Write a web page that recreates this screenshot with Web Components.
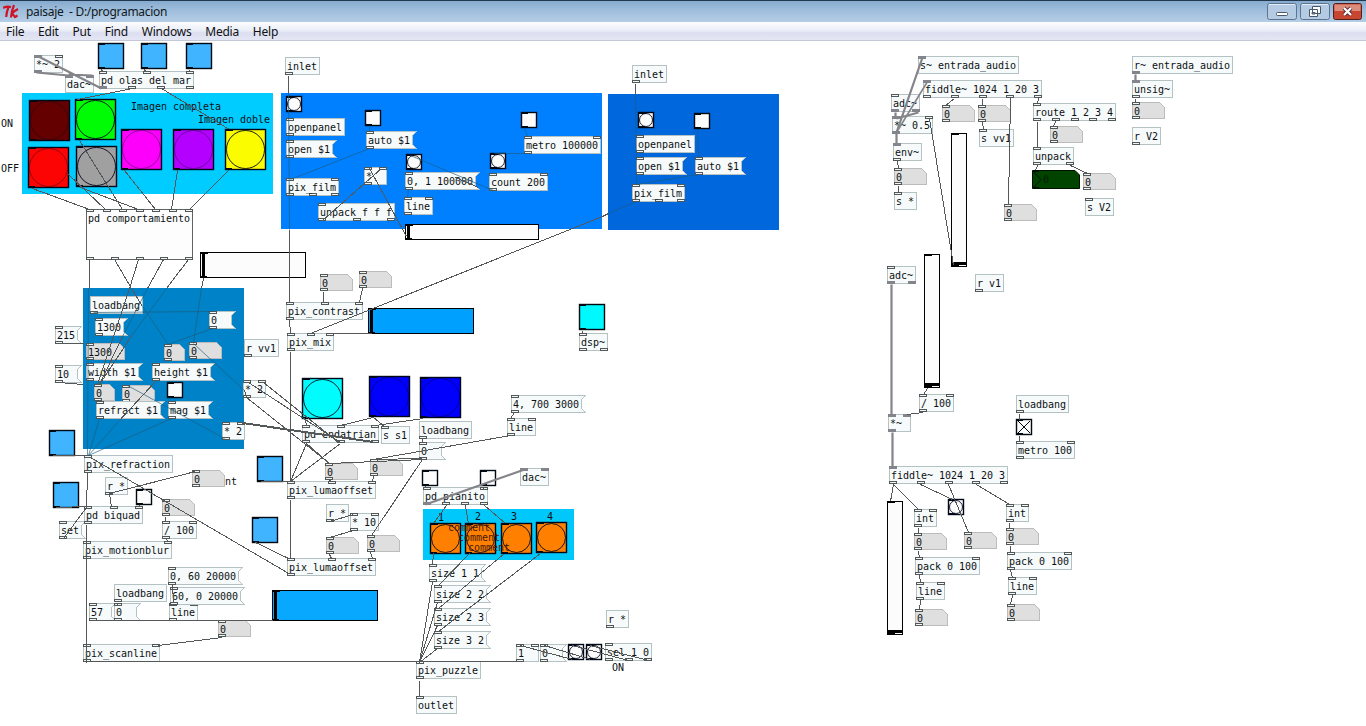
<!DOCTYPE html>
<html lang="en">
<head>
<meta charset="utf-8">
<title>paisaje - D:/programacion</title>
<style>
    body {
        margin: 0;
        background: #fff;
        overflow: hidden;
    }
</style>
</head>
<body>
<pd-window>
    <pd-titlebar slot="title">paisaje&nbsp; - D:/programacion</pd-titlebar>
    <pd-menu slot="menu"><span>File</span><span>Edit</span><span>Put</span><span>Find</span><span>Windows</span><span>Media</span><span>Help</span></pd-menu>

    <!-- panels -->
    <pd-panel x="22" y="93" w="251" h="101" color="#00ccff"></pd-panel>
    <pd-panel x="281" y="93" w="321" h="136" color="#0080ff"></pd-panel>
    <pd-panel x="608" y="94" w="171" h="136" color="#0068dc"></pd-panel>
    <pd-panel x="83" y="288" w="161" h="161" color="#0082c8"></pd-panel>
    <pd-panel x="423" y="509" w="151" h="51" color="#00c8fa"></pd-panel>

    <!-- image switches -->
    <pd-box x="34" y="55" in="sc" out="s">*~ 2</pd-box>
    <pd-box x="65" y="75" in="ss">dac~</pd-box>
    <pd-toggle x="98" y="43" size="26" color="#40b4ff"></pd-toggle>
    <pd-toggle x="141" y="43" size="26" color="#40b4ff"></pd-toggle>
    <pd-toggle x="186" y="43" size="26" color="#40b4ff"></pd-toggle>
    <pd-box x="99" y="71" in="ccc" out="sccc">pd olas del mar</pd-box>
    <pd-bang faint x="29" y="100" size="41" color="#640000"></pd-bang>
    <pd-bang x="75" y="99" size="41" color="#00fc04"></pd-bang>
    <pd-bang faint x="28" y="147" size="41" color="#fc0404"></pd-bang>
    <pd-bang x="76" y="146" size="41" color="#a0a0a0"></pd-bang>
    <pd-bang faint x="121" y="129" size="41" color="#fc00fc"></pd-bang>
    <pd-bang faint x="173" y="129" size="41" color="#b400ff"></pd-bang>
    <pd-bang x="225" y="129" size="41" color="#fcfc00"></pd-bang>
    <pd-box kind="text" x="129" y="97">Imagen completa</pd-box>
    <pd-box kind="text" x="196" y="110">Imagen doble</pd-box>
    <pd-box kind="text" x="-1" y="114">ON</pd-box>
    <pd-box kind="text" x="-1" y="159">OFF</pd-box>
    <pd-box class="sub" x="86" y="209" w="107" h="51" in="ccccccc" out="ccccc">pd comportamiento</pd-box>
    <pd-slider x="200" y="252" w="106" h="26"></pd-slider>

    <!-- first film -->
    <pd-box x="285" y="57" out="c">inlet</pd-box>
    <pd-bang x="286" y="96" size="16"></pd-bang>
    <pd-box x="286" y="118" in="c" out="c">openpanel</pd-box>
    <pd-box kind="msg" x="286" y="140" in="c" out="c">open $1</pd-box>
    <pd-box x="286" y="178" in="cc" out="ccc">pix_film</pd-box>
    <pd-toggle x="365" y="110" size="16"></pd-toggle>
    <pd-box kind="msg" x="366" y="131" in="c" out="c">auto $1</pd-box>
    <pd-bang x="406" y="154" size="16"></pd-bang>
    <pd-box kind="msg" x="405" y="172" in="c" out="c">0, 1 100000</pd-box>
    <pd-box x="404" y="197" in="cc" out="c">line</pd-box>
    <pd-box x="364" y="167" in="cc" out="c">*</pd-box>
    <pd-box x="318" y="203" in="c" out="ccc">unpack f f f</pd-box>
    <pd-slider x="405" y="224" w="134" h="16"></pd-slider>
    <pd-toggle x="521" y="112" size="16"></pd-toggle>
    <pd-box x="524" y="136" in="cc" out="c">metro 100000</pd-box>
    <pd-bang x="490" y="153" size="16"></pd-bang>
    <pd-box x="489" y="173" in="cc" out="c">count 200</pd-box>

    <!-- second film -->
    <pd-box x="632" y="65" out="c">inlet</pd-box>
    <pd-bang x="638" y="112" size="16"></pd-bang>
    <pd-toggle x="694" y="113" size="16"></pd-toggle>
    <pd-box x="636" y="135" in="c" out="c">openpanel</pd-box>
    <pd-box kind="msg" x="636" y="157" in="c" out="c">open $1</pd-box>
    <pd-box kind="msg" x="695" y="157" in="c" out="c">auto $1</pd-box>
    <pd-box x="632" y="184" in="cc" out="ccc">pix_film</pd-box>

    <!-- refraction -->
    <pd-box x="90" y="296" out="c">loadbang</pd-box>
    <pd-box kind="msg" x="95" y="318" in="c" out="c">1300</pd-box>
    <pd-box kind="msg" x="209" y="311" in="c" out="c">0</pd-box>
    <pd-box kind="msg" x="55" y="326" in="c" out="c">215</pd-box>
    <pd-box kind="msg" x="55" y="365" in="c" out="c">10</pd-box>
    <pd-box kind="atom" x="86" y="343" w="39" in="c" out="c">1300</pd-box>
    <pd-box kind="msg" x="86" y="363" in="c" out="c">width $1</pd-box>
    <pd-box kind="msg" x="152" y="363" in="c" out="c">height $1</pd-box>
    <pd-box kind="atom" x="164" y="344" w="21" in="c" out="c">0</pd-box>
    <pd-box kind="atom" x="189" y="342" in="c" out="c">0</pd-box>
    <pd-box x="244" y="339" out="c">r vv1</pd-box>
    <pd-box x="243" y="380" in="cc" out="c">* 2</pd-box>
    <pd-box kind="atom" x="94" y="384" w="21" in="c" out="c">0</pd-box>
    <pd-box kind="atom" x="122" y="385" in="c" out="c">0</pd-box>
    <pd-toggle x="167" y="382" size="16"></pd-toggle>
    <pd-box kind="msg" x="96" y="401" in="c" out="c">refract $1</pd-box>
    <pd-box kind="msg" x="168" y="401" in="c" out="c">mag $1</pd-box>
    <pd-box x="222" y="422" in="cc" out="c">* 2</pd-box>
    <pd-toggle x="49" y="430" size="26" color="#40b4ff"></pd-toggle>
    <pd-box x="84" y="455" in="c" out="c">pix_refraction</pd-box>
    <pd-toggle x="53" y="482" size="26" color="#40b4ff"></pd-toggle>
    <pd-box x="105" y="477" out="c">r *</pd-box>
    <pd-box kind="text" x="223" y="472">nt</pd-box>
    <pd-box kind="atom" x="192" y="470" in="c" out="c">0</pd-box>
    <pd-toggle x="136" y="489" size="16"></pd-toggle>
    <pd-box kind="msg" x="59" y="521" in="c" out="c">set</pd-box>
    <pd-box x="84" y="506" in="ccc" out="c">pd biquad</pd-box>
    <pd-box kind="atom" x="162" y="499" in="c" out="c">0</pd-box>
    <pd-box x="162" y="521" in="cc" out="c">/ 100</pd-box>
    <pd-box x="83" y="541" in="cc" out="c">pix_motionblur</pd-box>
    <pd-box kind="msg" x="168" y="567" in="c" out="c">0, 60 20000</pd-box>
    <pd-box x="169" y="603" in="cc" out="c">line</pd-box>
    <pd-box kind="msg" x="170" y="587" in="c" out="c">60, 0 20000</pd-box>
    <pd-box x="114" y="584" out="c">loadbang</pd-box>
    <pd-box kind="msg" x="89" y="603" in="c" out="c">57</pd-box>
    <pd-box kind="msg" x="114" y="603" in="c" out="c">0</pd-box>
    <pd-box kind="atom" x="218" y="620" in="c" out="c">0</pd-box>
    <pd-box x="83" y="644" in="cc" out="c">pix_scanline</pd-box>
    <pd-slider x="272" y="590" w="106" h="31" color="#08a8ff"></pd-slider>

    <!-- contrast and mix -->
    <pd-box kind="atom" x="320" y="274" in="c" out="c">0</pd-box>
    <pd-box kind="atom" x="359" y="271" in="c" out="c">0</pd-box>
    <pd-box x="286" y="302" in="ccc" out="c">pix_contrast</pd-box>
    <pd-box x="287" y="333" in="ccc" out="c">pix_mix</pd-box>
    <pd-slider x="368" y="308" w="106" h="26" color="#00a0ff"></pd-slider>
    <pd-toggle x="579" y="304" size="26" color="#00f8ff"></pd-toggle>
    <pd-box x="579" y="333" in="c" out="cc">dsp~</pd-box>
    <pd-bang x="302" y="378" size="41" color="#00fcfc"></pd-bang>
    <pd-bang faint x="369" y="376" size="41" color="#0000fc"></pd-bang>
    <pd-bang faint x="420" y="377" size="41" color="#0000fc"></pd-bang>
    <pd-box x="302" y="425" in="ccc" out="ccc">pd endatrian</pd-box>
    <pd-box x="381" y="426" in="c">s s1</pd-box>
    <pd-box x="419" y="421" out="c">loadbang</pd-box>
    <pd-box kind="msg" x="419" y="442" in="c" out="c">0</pd-box>
    <pd-box kind="msg" x="511" y="395" in="c" out="c">4, 700 3000</pd-box>
    <pd-box x="507" y="418" in="cc" out="c">line</pd-box>

    <!-- luma offset -->
    <pd-toggle x="257" y="456" size="26" color="#40b4ff"></pd-toggle>
    <pd-toggle x="252" y="517" size="26" color="#40b4ff"></pd-toggle>
    <pd-box kind="atom" x="325" y="463" in="c" out="c">0</pd-box>
    <pd-box kind="atom" x="370" y="459" in="c" out="c">0</pd-box>
    <pd-box x="287" y="481" in="ccc" out="c">pix_lumaoffset</pd-box>
    <pd-box x="326" y="504" out="c">r *</pd-box>
    <pd-box x="350" y="513" in="cc" out="c">* 10</pd-box>
    <pd-box kind="atom" x="326" y="537" in="c" out="c">0</pd-box>
    <pd-box kind="atom" x="367" y="535" in="c" out="c">0</pd-box>
    <pd-box x="287" y="558" in="ccc" out="c">pix_lumaoffset</pd-box>

    <!-- puzzle -->
    <pd-toggle x="422" y="470" size="16"></pd-toggle>
    <pd-toggle x="480" y="470" size="16"></pd-toggle>
    <pd-box x="520" y="468" in="ss">dac~</pd-box>
    <pd-box x="423" y="487" in="cc" out="sccc">pd pianito</pd-box>
    <pd-box kind="text" x="436" y="508">1</pd-box>
    <pd-box kind="text" x="473" y="507">2</pd-box>
    <pd-box kind="text" x="509" y="507">3</pd-box>
    <pd-box kind="text" x="545" y="507">4</pd-box>
    <pd-bang x="430" y="523" size="31" color="#ff8000"></pd-bang>
    <pd-bang x="465" y="523" size="31" color="#ff8000"></pd-bang>
    <pd-bang x="501" y="523" size="31" color="#ff8000"></pd-bang>
    <pd-bang x="536" y="522" size="31" color="#ff8000"></pd-bang>
    <pd-box kind="text" class="dim" x="446" y="518">comment</pd-box>
    <pd-box kind="text" class="dim" x="456" y="528">comment</pd-box>
    <pd-box kind="text" class="dim" x="466" y="538">comment</pd-box>
    <pd-box kind="msg" x="429" y="564" in="c" out="c">size 1 1</pd-box>
    <pd-box kind="msg" x="434" y="585" in="c" out="c">size 2 2</pd-box>
    <pd-box kind="msg" x="434" y="608" in="c" out="c">size 2 3</pd-box>
    <pd-box kind="msg" x="434" y="631" in="c" out="c">size 3 2</pd-box>
    <pd-box x="416" y="661" in="c" out="c">pix_puzzle</pd-box>
    <pd-box x="416" y="696" in="c">outlet</pd-box>
    <pd-box x="516" y="644" in="cc" out="c">1</pd-box>
    <pd-box kind="msg" x="540" y="644" in="c" out="c">0</pd-box>
    <pd-bang x="568" y="644" size="16"></pd-bang>
    <pd-bang x="586" y="644" size="16"></pd-bang>
    <pd-box x="605" y="643" in="c" out="ccc">sel 1 0</pd-box>
    <pd-box kind="text" x="610" y="658">ON</pd-box>
    <pd-box x="606" y="610" out="c">r *</pd-box>

    <!-- audio input -->
    <pd-box x="918" y="56" in="s">s~ entrada_audio</pd-box>
    <pd-box x="923" y="80" in="s" out="ccccc">fiddle~ 1024 1 20 3</pd-box>
    <pd-box x="891" y="94" in="c" out="ss">adc~</pd-box>
    <pd-box x="892" y="116" in="sc" out="s">*~ 0.5</pd-box>
    <pd-box x="893" y="143" in="s" out="c">env~</pd-box>
    <pd-box kind="atom" x="894" y="168" in="c" out="c">0</pd-box>
    <pd-box x="894" y="192" in="c">s *</pd-box>
    <pd-box kind="atom" x="942" y="105" in="c" out="c">0</pd-box>
    <pd-box kind="atom" x="978" y="105" in="c" out="c">0</pd-box>
    <pd-box x="979" y="129" in="c">s vv1</pd-box>
    <pd-slider vertical x="951" y="133" w="16" h="134"></pd-slider>
    <pd-box x="1033" y="103" in="c" out="ccccc">route 1 2 3 4</pd-box>
    <pd-box kind="atom" x="1050" y="126" in="c" out="c">0</pd-box>
    <pd-box x="1033" y="147" in="c" out="cc">unpack</pd-box>
    <pd-number x="1032" y="170" w="48" h="19">0</pd-number>
    <pd-box kind="atom" x="1083" y="173" in="c" out="c">0</pd-box>
    <pd-box x="1085" y="198" in="c">s V2</pd-box>
    <pd-box kind="atom" x="1004" y="204" in="c" out="c">0</pd-box>
    <pd-box x="1132" y="56" out="s">r~ entrada_audio</pd-box>
    <pd-box x="1132" y="80" in="s" out="c">unsig~</pd-box>
    <pd-box kind="atom" x="1132" y="102" in="c" out="c">0</pd-box>
    <pd-box x="1132" y="127" out="c">r V2</pd-box>

    <!-- pitch tracker -->
    <pd-box x="887" y="266" in="c" out="ss">adc~</pd-box>
    <pd-slider vertical x="924" y="254" w="16" h="134"></pd-slider>
    <pd-box x="975" y="274" out="c">r v1</pd-box>
    <pd-box x="919" y="394" in="cc" out="c">/ 100</pd-box>
    <pd-box x="888" y="414" in="ss" out="s">*~</pd-box>
    <pd-box x="1016" y="395" out="c">loadbang</pd-box>
    <pd-toggle checked x="1016" y="419" size="16"></pd-toggle>
    <pd-box x="1016" y="441" in="cc" out="c">metro 100</pd-box>
    <pd-box x="889" y="466" in="s" out="ccccc">fiddle~ 1024 1 20 3</pd-box>
    <pd-slider vertical x="887" y="501" w="16" h="134"></pd-slider>
    <pd-box x="914" y="509" in="cc" out="c">int</pd-box>
    <pd-bang x="948" y="499" size="16"></pd-bang>
    <pd-box x="1006" y="504" in="cc" out="c">int</pd-box>
    <pd-box kind="atom" x="914" y="533" in="c" out="c">0</pd-box>
    <pd-box kind="atom" x="964" y="532" in="c" out="c">0</pd-box>
    <pd-box kind="atom" x="1006" y="528" in="c" out="c">0</pd-box>
    <pd-box x="915" y="557" in="cc" out="c">pack 0 100</pd-box>
    <pd-box x="1007" y="552" in="cc" out="c">pack 0 100</pd-box>
    <pd-box x="916" y="582" in="cc" out="c">line</pd-box>
    <pd-box x="1008" y="577" in="cc" out="c">line</pd-box>
    <pd-box kind="atom" x="915" y="609" in="c" out="c">0</pd-box>
    <pd-box kind="atom" x="1007" y="604" in="c" out="c">0</pd-box>

    <!-- patch cords, one M..L pair each -->
    <pd-cords d="
        M101 69L102 71 M144 69L145 71 M189 69L189 71
        M132 88L77 99 M161 88L229 129
        M32 188L89 209 M68 174L105 209 M79 140L122 209 M80 187L138 209
        M124 170L155 209 M177 170L171 209 M228 170L189 209
        M89 259L89 288 M114 259L131 288 M138 259L129 288 M163 259L147 288 M188 259L166 288
        M203 278L201 288
        M288 75L288 93 M289 229L289 302 M289 320L290 333 M290 351L290 481 M290 499L290 558
        M322 220L381 168 M406 236L369 168 M455 177L478 187
        M635 83L635 94 M602 216L310 333 M608 213L602 216
        M58 343L83 343 M58 382L83 384
        M131 288L142 306 M129 288L97 384 M122 336L99 384 M132 334L99 384 M155 381L118 421
        M244 390L246 397 M246 397L329 463
        M248 382L340 442 M263 382L338 442 M242 422L373 441 M242 423L373 442
        M52 455L87 455 M56 507L87 506 M87 473L86 507 M86 524L86 662
        M86 661L520 661 M90 457L290 574
        M195 471L109 493 M109 493L111 507 M63 538L86 507 M139 505L138 507
        M165 516L165 521 M166 539L168 541
        M172 584L173 603 M173 604L172 606 M117 602L117 604
        M92 620L272 620 M222 637L158 645
        M323 291L323 302 M362 288L359 302 M371 333L328 333
        M582 330L582 333 M305 419L306 425
        M373 417L340 425 M373 417L384 426 M423 418L375 425
        M306 443L290 481 M340 443L290 481 M306 443L329 463
        M510 435L373 459 M422 459L329 463 M422 458L373 459 M422 459L371 535
        M514 412L510 418 M422 438L422 442
        M329 480L331 481 M373 476L372 481
        M260 481L288 481 M255 542L288 558
        M329 521L353 514 M353 530L329 537 M329 554L331 558 M370 552L372 558
        M425 486L426 488 M483 486L483 488
        M446 505L433 523 M465 505L468 523 M484 505L505 523
        M433 553L432 564 M469 553L438 585 M504 553L438 608 M540 553L438 631
        M432 581L419 662 M437 602L419 662 M437 625L419 662 M437 648L419 662
        M419 680L419 696
        M520 645L572 659 M544 645L590 659 M572 645L628 660 M590 645L648 660
        M929 118L953 265
        M897 161L898 168 M898 185L898 192
        M954 98L945 105 M982 98L982 105 M1010 98L1008 204 M1038 98L1037 103 M982 122L983 129
        M1037 121L1037 147 M1055 121L1053 126 M1037 165L1035 170 M1070 165L1087 173
        M1135 98L1135 102
        M927 388L923 394 M923 412L907 414 M1019 413L1019 419 M1019 435L1019 441
        M893 484L890 501 M893 484L918 509 M920 484L952 499 M948 484L968 532 M976 484L1009 504
        M918 527L918 533 M918 551L919 557 M919 575L920 582 M920 600L919 609
        M1009 522L1009 528 M1010 545L1010 552 M1010 570L1012 577 M1012 595L1010 604"></pd-cords>
    <pd-cords kind="soft" d="
        M288 93L289 229 M369 148L290 179 M369 126L369 131
        M410 155L493 190 M527 153L494 153 M524 128L527 136 M408 189L407 197
        M635 94L636 184 M698 174L636 184 M697 129L698 157 M636 201L608 213
        M88 288L87 455 M142 306L167 343 M147 288L122 336 M166 288L132 334
        M201 288L193 342 M93 312L212 311 M212 328L167 344 M193 343L244 390
        M127 385L224 438 M118 421L88 455 M171 418L88 455 M99 418L88 455"></pd-cords>
    <pd-cords kind="signal" d="
        M38 56L101 88 M36 72L68 75 M68 74L92 75
        M425 504L524 469
        M922 57L896 132 M895 112L895 117 M918 112L896 118 M896 133L896 143
        M1135 74L1135 80 M891 284L891 414 M892 432L892 466"></pd-cords>
    <pd-cords kind="thin" d="M927 81L896 132"></pd-cords>
</pd-window>

<script>
/* places an element on the patch canvas from its x, y, w and h attributes */
class PdItem extends HTMLElement {
    constructor() {
        super();
        this.attachShadow({ mode: 'open' });
    }

    num(name, fallback = 0) {
        return this.hasAttribute(name) ? Number(this.getAttribute(name)) : fallback;
    }

    get color() {
        return this.getAttribute('color') || '#fcfcfc';
    }

    connectedCallback() {
        this.w = this.num('w', this.num('size'));
        this.h = this.num('h', this.num('size'));
        this.measure();
        this.shadowRoot.innerHTML = `
            <style>
                :host {
                    position: absolute;
                    left: ${this.num('x')}px;
                    top: ${this.num('y')}px;
                    width: ${this.w}px;
                    height: ${this.h}px;
                }
                svg {
                    position: absolute;
                    left: 0;
                    top: 0;
                    overflow: visible;
                }
                ${this.css()}
            </style>
            ${this.template()}
        `;
    }

    measure() {}
    css() { return ''; }
    template() { return ''; }
}


class PdPanel extends PdItem {
    css() {
        return `:host { background: ${this.color}; }`;
    }
}


/* object box, message box, number atom or plain comment */
class PdBox extends PdItem {
    measure() {
        this.kind = this.getAttribute('kind') || 'obj';
        const chars = Math.max(this.textContent.length, 3);
        const extra = { obj: 5, msg: 9, atom: 3, text: 5 }[this.kind];
        this.w = this.num('w', this.kind === 'atom' ? 33 : chars * 6 + extra);
        this.h = this.num('h', this.kind === 'atom' ? 17 : 18);
    }

    css() {
        return `
            .label {
                position: relative;
                display: block;
                padding: 4px 0 0 2px;
                font: 10px/12px "DejaVu Sans Mono", monospace;
                letter-spacing: -0.02px;
                white-space: pre;
                color: #0c1014;
            }
            .frame { fill: #f6fafa; stroke: #b4c2c4; }
            .atom { fill: #dfdfdf; stroke: #bcbcbc; }
            .port { fill: #f4f4f4; stroke: #505858; }
            .sig { fill: #84848c; stroke: #84848c; }
            :host(.sub) .frame { fill: #fdfdfd; stroke: #606468; }
            :host(.dim) .label { color: #481808; }
        `;
    }

    frame() {
        const r = this.w - 0.5;
        const b = this.h - 0.5;
        if (this.kind === 'text') return '';
        if (this.kind === 'msg') {
            return `<path class="frame" d="M.5 .5H${r}L${r - 4} 4.5V${b - 4}L${r} ${b}H.5Z"/>`;
        }
        if (this.kind === 'atom') {
            return `<path class="atom" d="M.5 .5H${r - 5}L${r} 5.5V${b}H.5Z"/>`;
        }
        return `<path class="frame" d="M.5 .5H${r}V${b}H.5Z"/>`;
    }

    ports(list, y) {
        const span = this.w - (this.kind === 'msg' ? 4 : 0) - 8;
        return [...list].map((type, i) => {
            const x = list.length > 1 ? Math.round(span * i / (list.length - 1)) : 0;
            return `<rect class="port ${type === 's' ? 'sig' : ''}" x="${x + 0.5}" y="${y}" width="7" height="2"/>`;
        }).join('');
    }

    template() {
        return `
            <svg width="${this.w}" height="${this.h}" shape-rendering="crispEdges">
                ${this.frame()}
                ${this.ports(this.getAttribute('in') || '', 0.5)}
                ${this.ports(this.getAttribute('out') || '', this.h - 2.5)}
            </svg>
            <span class="label"><slot></slot></span>
        `;
    }
}


class PdBang extends PdItem {
    template() {
        const s = this.w;
        const ring = this.hasAttribute('faint') ? 0.4 : 0.9;
        return `
            <svg width="${s}" height="${s}" fill="${this.color}" stroke="#000818">
                <rect x=".5" y=".5" width="${s - 1}" height="${s - 1}" stroke-width="1.4"/>
                <circle cx="${s / 2}" cy="${s / 2}" r="${s / 2 - 1.5}" stroke-opacity="${ring}"/>
                <path d="M0 1.5H8M0 ${s - 1.5}H7" shape-rendering="crispEdges"/>
            </svg>
        `;
    }
}


class PdToggle extends PdItem {
    template() {
        const s = this.w;
        const cross = this.hasAttribute('checked') ? `<path d="M2 2L${s - 2} ${s - 2}M${s - 2} 2L2 ${s - 2}"/>` : '';
        return `
            <svg width="${s}" height="${s}" fill="${this.color}" stroke="#000810">
                <rect x=".5" y=".5" width="${s - 1}" height="${s - 1}" stroke-width="1.4"/>
                ${cross}
                <path d="M0 1.5H7M0 ${s - 1.5}H7" shape-rendering="crispEdges"/>
            </svg>
        `;
    }
}


class PdSlider extends PdItem {
    template() {
        const { w, h } = this;
        const knob = this.hasAttribute('vertical')
            ? `M1 ${h - 3.5}H${w - 1}M0 ${h - 1.5}H8`
            : `M3.5 1V${h - 1}`;
        return `
            <svg width="${w}" height="${h}" fill="${this.color}" stroke="#000" shape-rendering="crispEdges">
                <rect x=".5" y=".5" width="${w - 1}" height="${h - 1}"/>
                <path d="${knob}" stroke-width="3"/>
                <path d="M0 1.5H8M0 ${h - 1.5}H7"/>
            </svg>
        `;
    }
}


class PdNumber extends PdItem {
    css() {
        return `
            span {
                position: relative;
                display: block;
                padding: 4px 0 0 11px;
                font: 10px/12px "DejaVu Sans Mono", monospace;
                color: #001c00;
            }
        `;
    }

    template() {
        const { w, h } = this;
        return `
            <svg width="${w}" height="${h}" fill="#004400" stroke="#001000">
                <path d="M.5 .5H${w - 5}L${w - 0.5} 5V${h - 0.5}H.5Z"/>
                <path d="M1 1L9 ${h / 2}L1 ${h - 1}" fill="none"/>
                <path d="M0 1.5H7M0 ${h - 1.5}H7"/>
            </svg>
            <span><slot></slot></span>
        `;
    }
}


class PdCords extends PdItem {
    css() {
        return `
            :host { pointer-events: none; }
            path {
                fill: none;
                stroke: #545858;
                shape-rendering: crispEdges;
            }
            :host([kind="soft"]) path {
                stroke: #1c5c78;
                opacity: .65;
                shape-rendering: auto;
            }
            :host([kind="signal"]) path {
                stroke: #84848a;
                stroke-width: 2.2;
                shape-rendering: auto;
            }
            :host([kind="thin"]) path {
                stroke: #84848a;
                stroke-width: 1.6;
                shape-rendering: auto;
            }
        `;
    }

    template() {
        return `<svg width="1366" height="726"><path transform="translate(.5 .5)" d="${this.getAttribute('d').trim()}"/></svg>`;
    }
}


class PdTitlebar extends HTMLElement {
    constructor() {
        super();
        this.attachShadow({ mode: 'open' }).innerHTML = `
            <style>
                :host {
                    display: flex;
                    align-items: center;
                    box-sizing: border-box;
                    height: 22px;
                    padding: 0 4px 0 3px;
                    border-top: 1px solid #203850;
                    background: linear-gradient(#86abce, #9dbcdb 40%, #b5cde6);
                    font: 12px/20px "Noto Sans", sans-serif;
                    color: #101820;
                }
                .title { flex: 1; margin-left: 7px; white-space: pre; letter-spacing: -.3px; }
                .buttons { display: flex; gap: 3px; }
                .buttons svg { display: block; }
            </style>
            <svg width="16" height="16" viewBox="0 0 16 16" fill="none" stroke="#d01428" stroke-width="2.2">
                <path d="M0 4Q3 2 8 3M5.500 3Q3.500 8 3.200 13"/>
                <path d="M11 1Q8.500 7 8 13.500M15 5Q11 7 9 9.500Q10.500 11 12 13L14.500 11.500"/>
            </svg>
            <span class="title"><slot></slot></span>
            <span class="buttons">
                <svg width="30" height="17" viewBox="0 0 30 17">
                    <rect x=".5" y=".5" width="29" height="16" rx="2" fill="#b4cbe3" stroke="#5c7490"/>
                    <path d="M2 1.500H28" stroke="#e0ecf6"/>
                    <rect x="9.500" y="9.500" width="11" height="3" rx="1" fill="#fff" stroke="#4a586c"/>
                </svg>
                <svg width="30" height="17" viewBox="0 0 30 17">
                    <rect x=".5" y=".5" width="29" height="16" rx="2" fill="#b4cbe3" stroke="#5c7490"/>
                    <path d="M2 1.500H28" stroke="#e0ecf6"/>
                    <path d="M12.500 3.500H20.500V10.500H12.500Z M9.500 6.500H17.500V13.500H9.500Z" fill="#fff" stroke="#4a586c"/>
                    <path d="M12 9.500H15V11H12Z" fill="#8ba6c4" stroke="#4a586c"/>
                </svg>
                <svg width="29" height="17" viewBox="0 0 29 17">
                    <rect x=".5" y=".5" width="28" height="16" rx="2" fill="#c8452f" stroke="#50201c"/>
                    <path d="M1.500 1.500H27.500V8H1.500Z" fill="#dd8c7c"/>
                    <path d="M11 5L18 12M18 5L11 12" stroke="#5a2c34" stroke-width="4"/>
                    <path d="M11 5L18 12M18 5L11 12" stroke="#fff" stroke-width="2.200"/>
                </svg>
            </span>
        `;
    }
}


class PdMenu extends HTMLElement {
    constructor() {
        super();
        this.attachShadow({ mode: 'open' }).innerHTML = `
            <style>
                :host {
                    display: flex;
                    gap: 13.8px;
                    box-sizing: border-box;
                    height: 19px;
                    padding-left: 6px;
                    border-bottom: 1px solid #c4c8d4;
                    background: linear-gradient(#fcfcfe, #eceff8 45%, #dcdff0 60%, #e4e6f4);
                    font: 12px/19px "Noto Sans", sans-serif;
                    letter-spacing: -.22px;
                    color: #101014;
                }
            </style>
            <slot></slot>
        `;
    }
}


class PdWindow extends HTMLElement {
    constructor() {
        super();
        this.attachShadow({ mode: 'open' }).innerHTML = `
            <style>
                :host {
                    position: relative;
                    display: flex;
                    flex-direction: column;
                    width: 1366px;
                    height: 726px;
                    overflow: hidden;
                    background: #fff;
                }
            </style>
            <slot name="title"></slot>
            <slot name="menu"></slot>
            <slot></slot>
        `;
    }
}

customElements.define('pd-window', PdWindow);
customElements.define('pd-titlebar', PdTitlebar);
customElements.define('pd-menu', PdMenu);
customElements.define('pd-panel', PdPanel);
customElements.define('pd-box', PdBox);
customElements.define('pd-bang', PdBang);
customElements.define('pd-toggle', PdToggle);
customElements.define('pd-slider', PdSlider);
customElements.define('pd-number', PdNumber);
customElements.define('pd-cords', PdCords);
</script>
</body>
</html>
